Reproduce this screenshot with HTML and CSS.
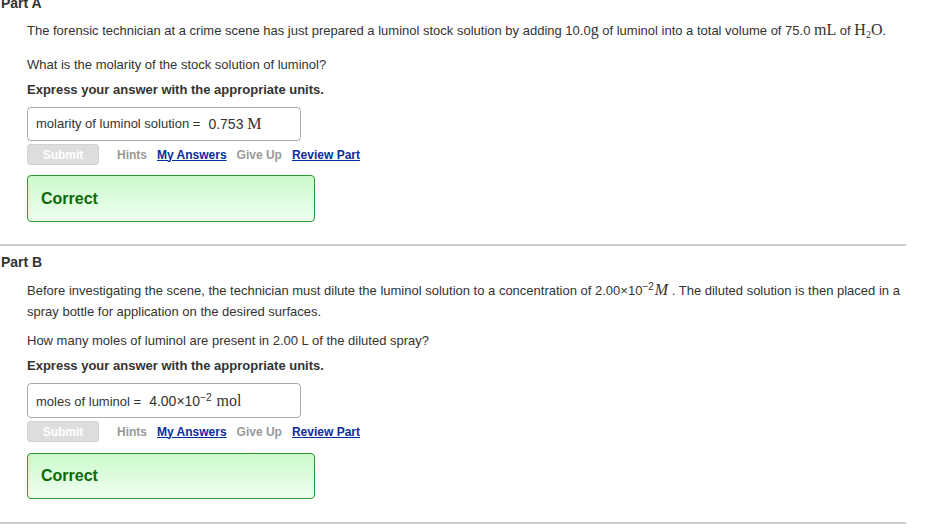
FILE: index.html
```html
<!DOCTYPE html>
<html>
<head>
<meta charset="utf-8">
<link rel="stylesheet" href="styles.css">
</head>
<body>
<div class="page">
  <section class="part part-a">
    <h2 class="part-title">Part A</h2>
    <div class="part-body">
      <p class="text intro">The forensic technician at a crime scene has just prepared a luminol stock solution by adding 10.0<span class="m">g</span> of luminol into a total volume of 75.0 <span class="m">mL</span> of <span class="m">H<sub>2</sub>O</span>.</p>
      <p class="text question">What is the molarity of the stock solution of luminol?</p>
      <p class="text instr">Express your answer with the appropriate units.</p>
      <div class="answer">
        <span class="label">molarity of luminol solution =</span>
        <span class="value">0.753 <span class="m unit">M</span></span>
      </div>
      <div class="actions">
        <span class="btn">Submit</span>
        <span class="act dim first">Hints</span>
        <a class="act link" href="#">My Answers</a>
        <span class="act dim">Give Up</span>
        <a class="act link" href="#">Review Part</a>
      </div>
      <div class="correct">Correct</div>
    </div>
  </section>
  <section class="part part-b">
    <h2 class="part-title">Part B</h2>
    <div class="part-body">
      <p class="text intro two">Before investigating the scene, the technician must dilute the luminol solution to a concentration of 2.00×10<sup>−2</sup><span class="m it">M</span> . The diluted solution is then placed in a spray bottle for application on the desired surfaces.</p>
      <p class="text question">How many moles of luminol are present in 2.00 L of the diluted spray?</p>
      <p class="text instr">Express your answer with the appropriate units.</p>
      <div class="answer tall">
        <span class="label">moles of luminol =</span>
        <span class="value">4.00×10<sup>−2</sup> <span class="m unit">mol</span></span>
      </div>
      <div class="actions">
        <span class="btn">Submit</span>
        <span class="act dim first">Hints</span>
        <a class="act link" href="#">My Answers</a>
        <span class="act dim">Give Up</span>
        <a class="act link" href="#">Review Part</a>
      </div>
      <div class="correct">Correct</div>
    </div>
  </section>
</div>
</body>
</html>
```
FILE: styles.css
```css
* { box-sizing: border-box; }
html, body { margin: 0; padding: 0; background: #fff; }
body {
  font-family: "Liberation Sans", Arial, sans-serif;
  color: #333;
  font-size: 13px;
  overflow: hidden;
}
.page { width: 906px; }
.part { border-bottom: 2px solid #cccccc; }
.part-a { margin-top: -5px; padding-bottom: 22px; }
.part-b { padding-top: 8px; padding-bottom: 23px; }
.part-title {
  margin: 0;
  padding-left: 1px;
  font-size: 14px;
  line-height: 16px;
  font-weight: bold;
  color: #333;
}
.part-body { padding-left: 27px; }
.text { margin: 0; font-size: 13px; line-height: 20px; }
.intro { margin-top: 9px; }
.intro.two { margin-top: 9px; line-height: 21px; }
.question { margin-top: 14px; }
.part-b .question { margin-top: 9px; }
.instr { margin-top: 5px; font-weight: bold; }
.m { font-family: "Liberation Serif", "Times New Roman", serif; font-size: 16px; }
.it { font-style: italic; }
sub { font-size: 10px; vertical-align: -3px; line-height: 0; }
sup { font-size: 10px; vertical-align: 5px; line-height: 0; margin-right: 1px; }
.answer {
  margin-top: 7px;
  width: 274px;
  height: 34px;
  border: 1px solid #aaa;
  border-radius: 4px;
  padding-left: 8px;
  padding-bottom: 1px;
  display: flex;
  align-items: center;
  gap: 8px;
  font-size: 13px;
}
.answer.tall { margin-top: 7px; height: 35px; padding-top: 1px; padding-bottom: 0; }
.value { font-size: 14px; }
.value .unit { font-size: 16px; }
.actions {
  margin-top: 3px;
  height: 21px;
  display: flex;
  align-items: center;
  font-weight: bold;
  font-size: 12px;
}
.btn {
  width: 72px;
  height: 21px;
  background: #dddddd;
  border: 1px solid #d2d2d2;
  border-radius: 3px;
  color: #fff;
  display: flex;
  align-items: center;
  justify-content: center;
}
.act { margin-left: 10px; }
.act.first { margin-left: 18px; }
.dim { color: #999; }
.link { color: #0a2d9e; text-decoration: underline; }
.correct {
  margin-top: 10px;
  width: 288px;
  height: 47px;
  border: 1px solid #2a9a2a;
  border-radius: 4px;
  background: linear-gradient(#ccf9cc, #effff0);
  color: #0a6a0a;
  font-weight: bold;
  font-size: 16px;
  display: flex;
  align-items: center;
  padding-left: 13px;
}
.part-b .correct { margin-top: 11px; height: 46px; }
```
